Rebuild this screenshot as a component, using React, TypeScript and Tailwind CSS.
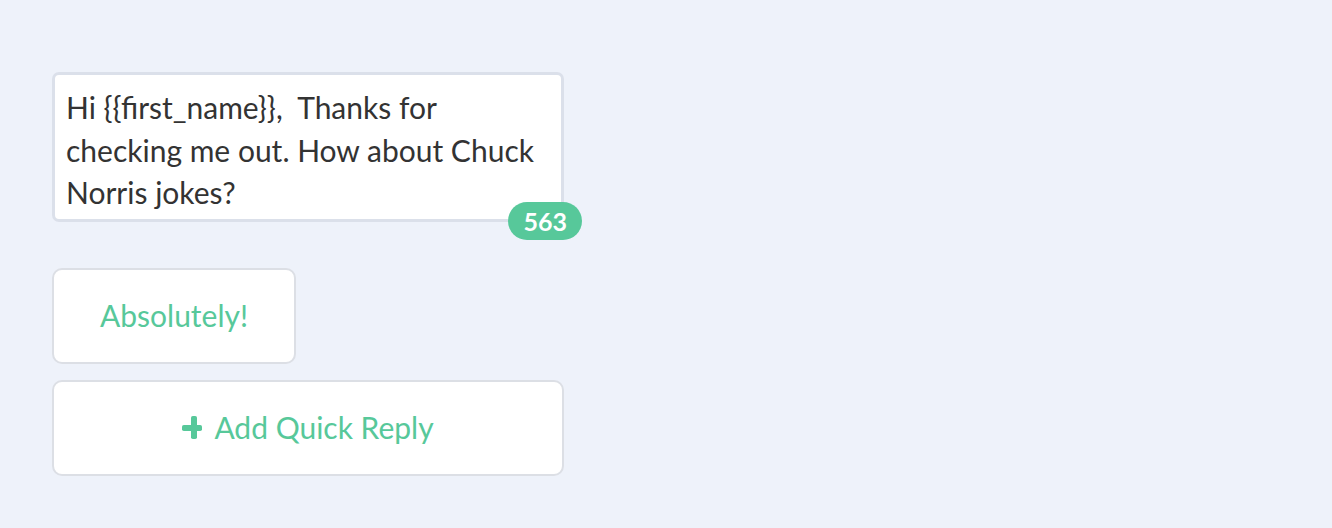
import { useState } from "react";

const PlusIcon = () => (
  <svg viewBox="0 0 20 23" className="w-[20px] h-[23px] shrink-0" fill="#57c89a">
    <rect x="9" y="0" width="6" height="23" rx="1.8" />
    <rect x="0" y="9" width="20" height="6" rx="1.8" />
  </svg>
);

export default function App() {
  const [replies] = useState(["Absolutely!"]);
  const message = "Hi {{first_name}},  Thanks for checking me out. How about Chuck Norris jokes?";

  return (
    <div className="w-[1332px] h-[528px] bg-[#eef2fa] pt-[72px] pl-[52px] font-['Lato',_sans-serif]">
      <div className="relative w-[512px]">
        <div className="bg-white border-[3px] border-[#dbe0ea] rounded-[7px] pl-[11px] pr-[16px] pt-[11px] pb-[5px] text-[30px] leading-[42.5px] text-[#333333] whitespace-pre-wrap">
          {message}
        </div>
        <span className="absolute right-[-18px] bottom-[-18px] h-[38px] px-[15px] rounded-full bg-[#57c89a] text-white font-bold text-[25px] leading-[38px]">
          563
        </span>
      </div>

      <div className="mt-[46px] flex flex-col gap-[16px]">
        {replies.map((r) => (
          <button
            key={r}
            className="w-[244px] h-[96px] bg-white border-2 border-[#dcdfe5] rounded-[10px] text-[30px] text-[#57c89a] flex items-center justify-center"
          >
            {r}
          </button>
        ))}
        <button className="w-[512px] h-[96px] bg-white border-2 border-[#dcdfe5] rounded-[10px] text-[30px] text-[#57c89a] flex items-center justify-center gap-[12px]">
          <PlusIcon />
          <span>Add Quick Reply</span>
        </button>
      </div>
    </div>
  );
}
